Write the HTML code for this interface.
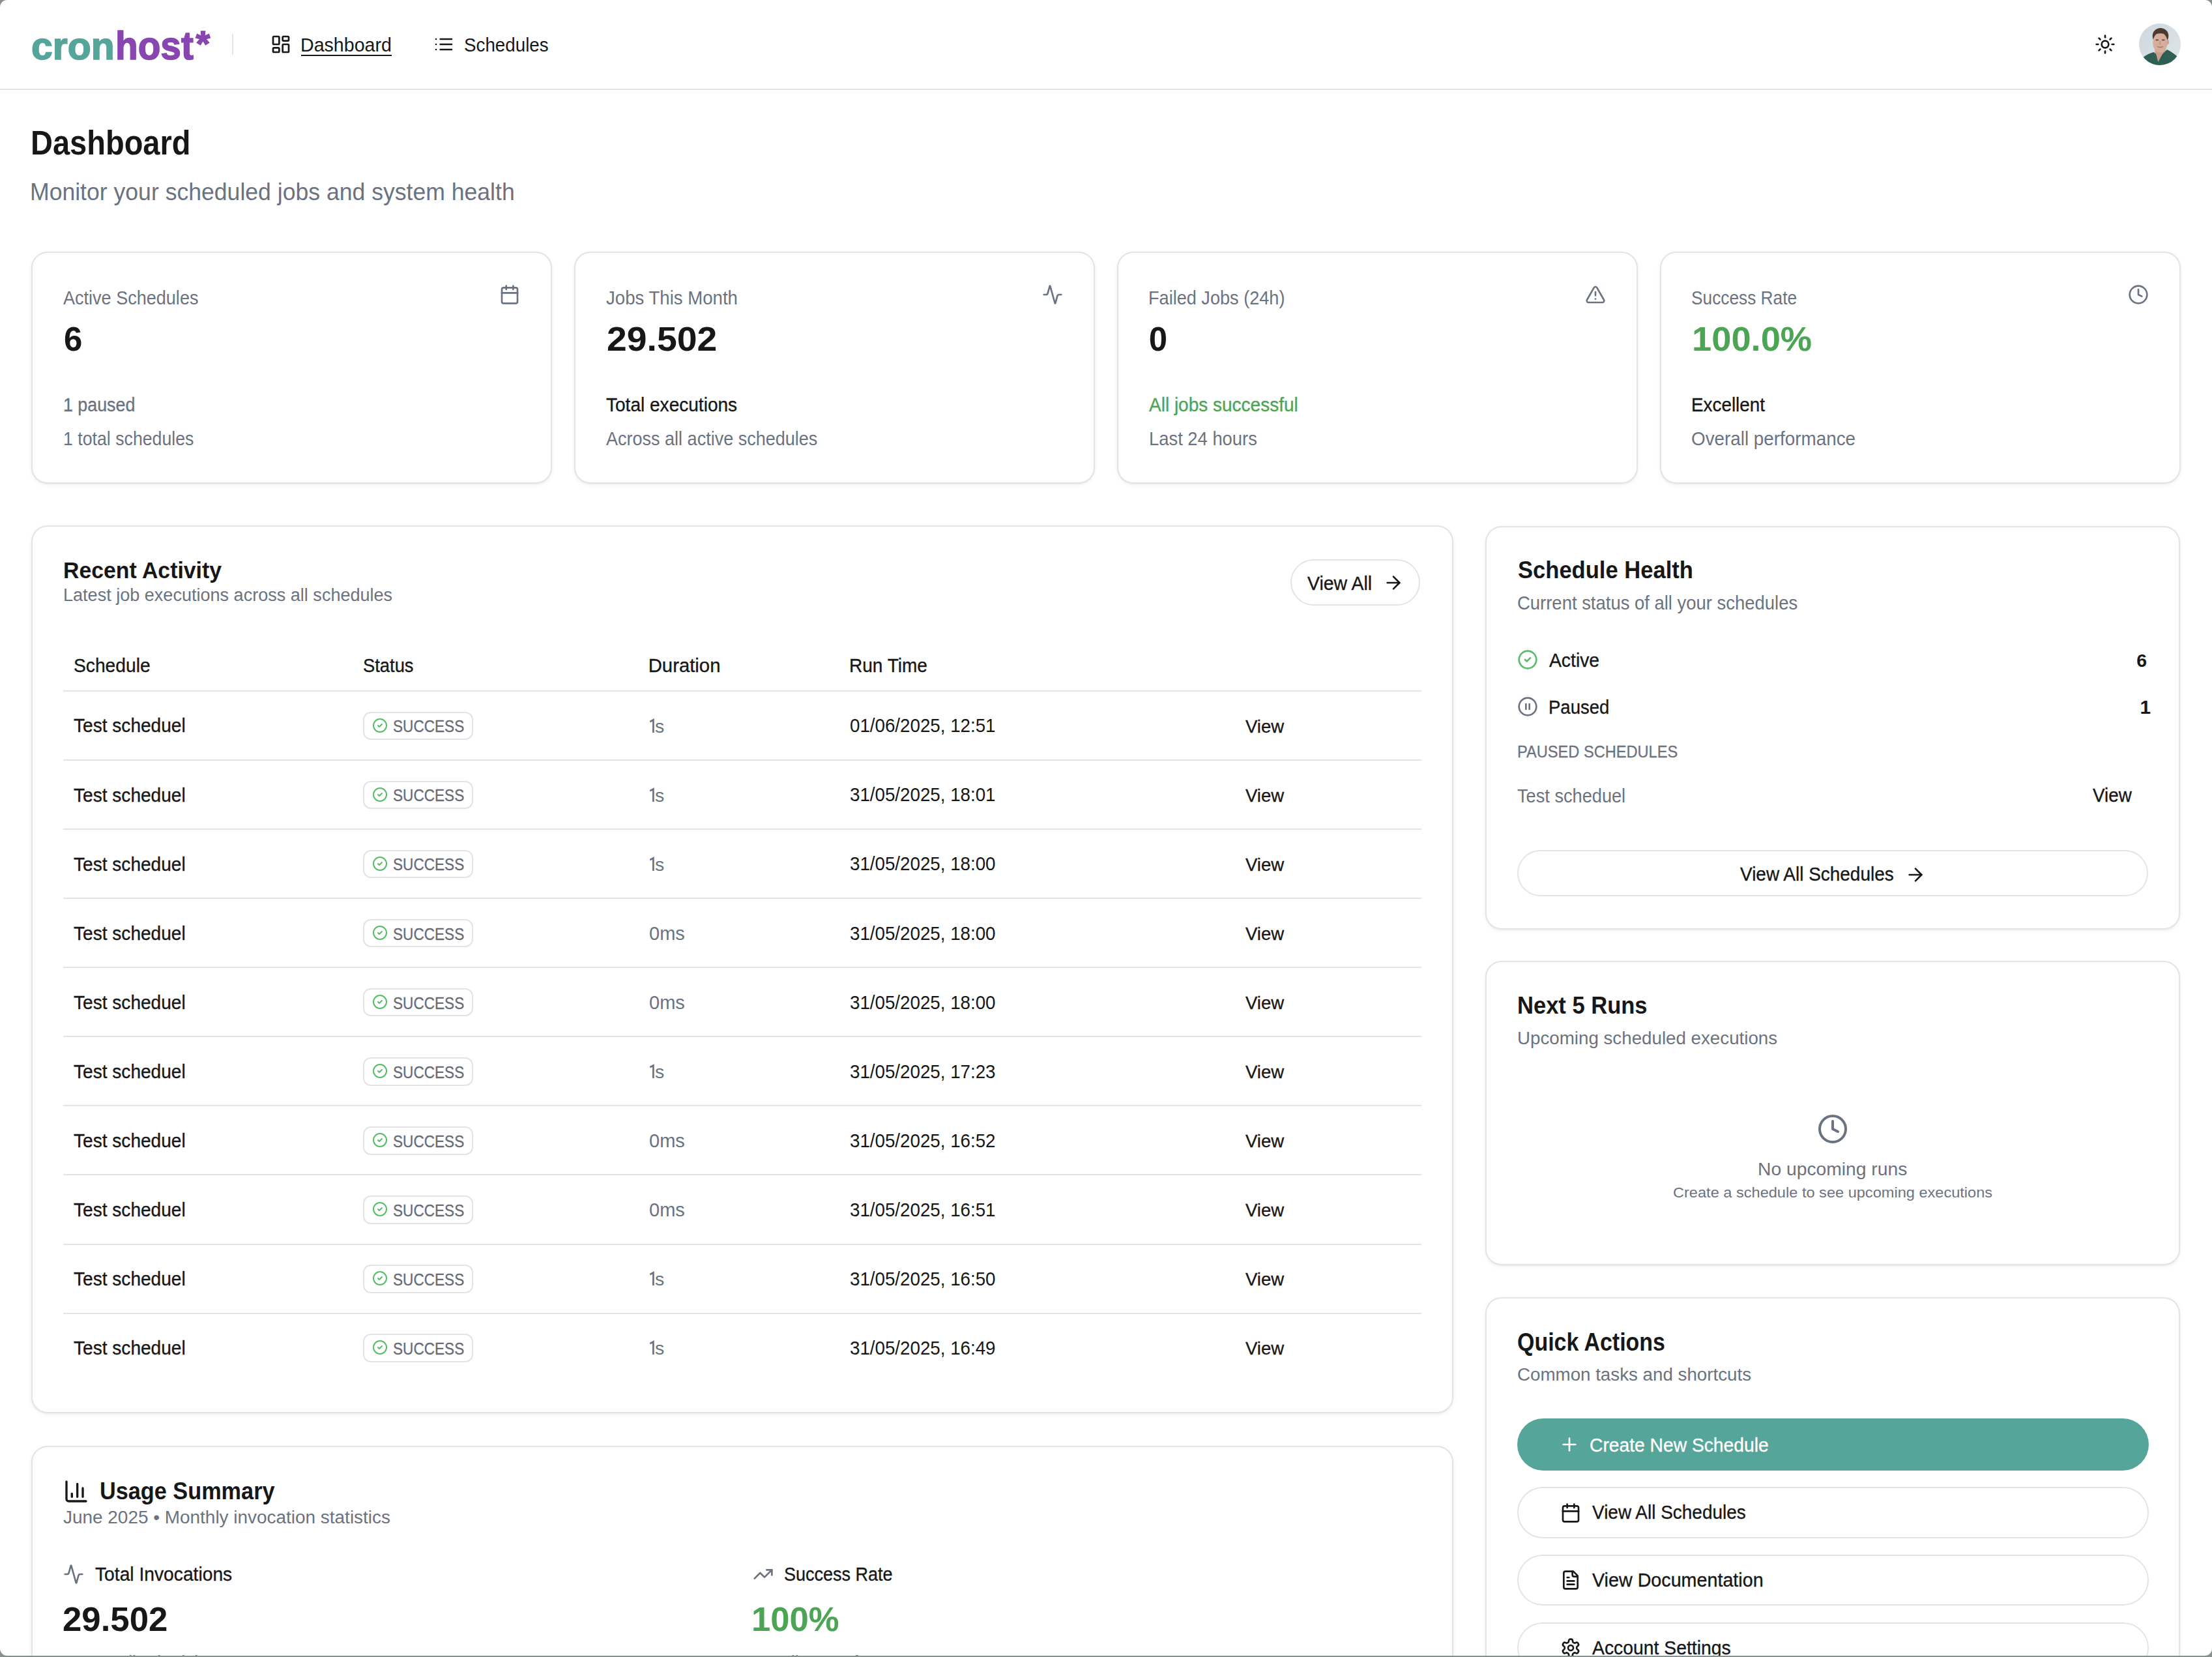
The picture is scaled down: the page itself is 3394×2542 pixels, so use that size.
<!DOCTYPE html>
<html><head><meta charset="utf-8"><style>
html,body{margin:0;padding:0;width:3394px;height:2542px;overflow:hidden;background:#87918f;font-family:"Liberation Sans",sans-serif;}
#win{position:absolute;left:0;top:0;width:3394px;height:2540px;border-radius:11px;background:#fff;overflow:hidden;}
.t{position:absolute;white-space:nowrap;}
</style></head><body><div id="win">
<div style="position:absolute;left:0.0px;top:136.0px;width:3394.0px;height:2.0px;background:#e4e4e7"></div><div style="position:absolute;left:356.0px;top:52.0px;width:2.0px;height:32.0px;background:#e4e4e7"></div><svg style="position:absolute;left:414.5px;top:52.0px" width="32" height="32" viewBox="0 0 24 24" fill="none" stroke="#171717" stroke-width="2" stroke-linecap="round" stroke-linejoin="round"><rect width="7" height="9" x="3" y="3" rx="1"/><rect width="7" height="5" x="14" y="3" rx="1"/><rect width="7" height="9" x="14" y="12" rx="1"/><rect width="7" height="5" x="3" y="16" rx="1"/></svg><div style="position:absolute;left:462.0px;top:84.0px;width:139.0px;height:2.0px;background:#171717"></div><svg style="position:absolute;left:664.5px;top:52.0px" width="32" height="32" viewBox="0 0 24 24" fill="none" stroke="#171717" stroke-width="2" stroke-linecap="round" stroke-linejoin="round"><path d="M3 12h.01"/><path d="M3 18h.01"/><path d="M3 6h.01"/><path d="M8 12h13"/><path d="M8 18h13"/><path d="M8 6h13"/></svg><svg style="position:absolute;left:3214.0px;top:52.0px" width="32" height="32" viewBox="0 0 24 24" fill="none" stroke="#171717" stroke-width="2" stroke-linecap="round" stroke-linejoin="round"><circle cx="12" cy="12" r="4"/><path d="M12 2v2"/><path d="M12 20v2"/><path d="m4.93 4.93 1.41 1.41"/><path d="m17.66 17.66 1.41 1.41"/><path d="M2 12h2"/><path d="M20 12h2"/><path d="m6.34 17.66-1.41 1.41"/><path d="m19.07 4.93-1.41 1.41"/></svg><svg style="position:absolute;left:3282px;top:36px" width="64" height="64" viewBox="0 0 64 64">
<defs><clipPath id="av"><circle cx="32" cy="32" r="32"/></clipPath>
<linearGradient id="avbg" x1="0" y1="0" x2="1" y2="1"><stop offset="0" stop-color="#cdd7de"/><stop offset="1" stop-color="#dfe5ea"/></linearGradient></defs>
<g clip-path="url(#av)">
<rect width="64" height="64" fill="url(#avbg)"/>
<path d="M24 36 L41 36 L40 52 L30 60 L25 50 Z" fill="#c99f8e"/>
<path d="M-2 66 L6 52 Q14 46 23 44 L29.5 59 L36 47 L43 40 Q53 45 60 52 L66 66 Z" fill="#2d5f54"/>
<path d="M23 44 L29.5 59 L26 47 Z M43 40 L30 58 L38 46 Z" fill="#234a41"/>
<ellipse cx="33" cy="19" rx="12.3" ry="12" fill="#4b3a2f"/>
<ellipse cx="32.5" cy="29.5" rx="11.2" ry="15.5" fill="#d6ac9b"/>
<path d="M21.2 25 Q20.5 13 26 12 Q33 9 40 12 Q45 14 44.6 25 Q43.5 17 39 16 Q32 14.5 25 16.5 Q22 19 21.2 25 Z" fill="#4b3a2f"/>
<ellipse cx="44.2" cy="28.5" rx="2" ry="3.5" fill="#cfa392"/>
<rect x="25.5" y="24.5" width="4.5" height="1.8" rx="0.8" fill="#5e4338"/><rect x="35" y="24.5" width="4.5" height="1.8" rx="0.8" fill="#5e4338"/>
<path d="M32.5 27 L31.5 31.5 L34 31.5" stroke="#b98a78" stroke-width="1" fill="none"/>
<path d="M28 35.5 Q32.5 37.5 37 35.5" stroke="#9c6b5c" stroke-width="1.3" fill="none"/>
</g></svg>
<div style="position:absolute;left:48.0px;top:386.0px;width:799.0px;height:356.0px;border:2px solid #e4e4e7;border-radius:25px;background:#fff;box-sizing:border-box;box-shadow:0 2px 6px rgba(0,0,0,0.06),0 1px 2px rgba(0,0,0,0.04)"></div><div style="position:absolute;left:881.0px;top:386.0px;width:799.0px;height:356.0px;border:2px solid #e4e4e7;border-radius:25px;background:#fff;box-sizing:border-box;box-shadow:0 2px 6px rgba(0,0,0,0.06),0 1px 2px rgba(0,0,0,0.04)"></div><div style="position:absolute;left:1714.0px;top:386.0px;width:799.0px;height:356.0px;border:2px solid #e4e4e7;border-radius:25px;background:#fff;box-sizing:border-box;box-shadow:0 2px 6px rgba(0,0,0,0.06),0 1px 2px rgba(0,0,0,0.04)"></div><div style="position:absolute;left:2547.0px;top:386.0px;width:799.0px;height:356.0px;border:2px solid #e4e4e7;border-radius:25px;background:#fff;box-sizing:border-box;box-shadow:0 2px 6px rgba(0,0,0,0.06),0 1px 2px rgba(0,0,0,0.04)"></div><svg style="position:absolute;left:766.0px;top:436.0px" width="32" height="32" viewBox="0 0 24 24" fill="none" stroke="#6b7280" stroke-width="2" stroke-linecap="round" stroke-linejoin="round"><path d="M8 2v4"/><path d="M16 2v4"/><rect width="18" height="18" x="3" y="4" rx="2"/><path d="M3 10h18"/></svg><svg style="position:absolute;left:1599.0px;top:436.0px" width="32" height="32" viewBox="0 0 24 24" fill="none" stroke="#6b7280" stroke-width="2" stroke-linecap="round" stroke-linejoin="round"><path d="M22 12h-2.48a2 2 0 0 0-1.93 1.46l-2.35 8.36a.25.25 0 0 1-.48 0L9.24 2.18a.25.25 0 0 0-.48 0l-2.35 8.36A2 2 0 0 1 4.49 12H2"/></svg><svg style="position:absolute;left:2432.0px;top:436.0px" width="32" height="32" viewBox="0 0 24 24" fill="none" stroke="#6b7280" stroke-width="2" stroke-linecap="round" stroke-linejoin="round"><path d="m21.73 18-8-14a2 2 0 0 0-3.48 0l-8 14A2 2 0 0 0 4 21h16a2 2 0 0 0 1.73-3"/><path d="M12 9v4"/><path d="M12 17h.01"/></svg><svg style="position:absolute;left:3265.0px;top:436.0px" width="32" height="32" viewBox="0 0 24 24" fill="none" stroke="#6b7280" stroke-width="2" stroke-linecap="round" stroke-linejoin="round"><circle cx="12" cy="12" r="10"/><polyline points="12 6 12 12 16 14"/></svg><div style="position:absolute;left:48.0px;top:806.0px;width:2182.0px;height:1362.0px;border:2px solid #e4e4e7;border-radius:25px;background:#fff;box-sizing:border-box;box-shadow:0 2px 6px rgba(0,0,0,0.06),0 1px 2px rgba(0,0,0,0.04)"></div><div style="position:absolute;left:1980.4px;top:858.1px;width:199.1px;height:71.4px;border:2px solid #e4e4e7;border-radius:40px;box-sizing:border-box;background:#fff"></div><svg style="position:absolute;left:2122.2px;top:878.2px" width="32" height="32" viewBox="0 0 24 24" fill="none" stroke="#171717" stroke-width="2" stroke-linecap="round" stroke-linejoin="round"><path d="M5 12h14"/><path d="m12 5 7 7-7 7"/></svg><div style="position:absolute;left:97.0px;top:1059.1px;width:2084.0px;height:2.0px;background:#e4e4e7"></div><div style="position:absolute;left:97.0px;top:1165.1px;width:2084.0px;height:2.0px;background:#e4e4e7"></div><div style="position:absolute;left:97.0px;top:1271.2px;width:2084.0px;height:2.0px;background:#e4e4e7"></div><div style="position:absolute;left:97.0px;top:1377.2px;width:2084.0px;height:2.0px;background:#e4e4e7"></div><div style="position:absolute;left:97.0px;top:1483.3px;width:2084.0px;height:2.0px;background:#e4e4e7"></div><div style="position:absolute;left:97.0px;top:1589.3px;width:2084.0px;height:2.0px;background:#e4e4e7"></div><div style="position:absolute;left:97.0px;top:1695.4px;width:2084.0px;height:2.0px;background:#e4e4e7"></div><div style="position:absolute;left:97.0px;top:1801.4px;width:2084.0px;height:2.0px;background:#e4e4e7"></div><div style="position:absolute;left:97.0px;top:1907.5px;width:2084.0px;height:2.0px;background:#e4e4e7"></div><div style="position:absolute;left:97.0px;top:2013.5px;width:2084.0px;height:2.0px;background:#e4e4e7"></div><div style="position:absolute;left:557.2px;top:1091.7px;width:168.4px;height:43.6px;border:2px solid #e4e4e7;border-radius:12px;box-sizing:border-box;background:#fff"></div><svg style="position:absolute;left:571.0px;top:1101.0px" width="24" height="24" viewBox="0 0 24 24" fill="none" stroke="#56bd68" stroke-width="2" stroke-linecap="round" stroke-linejoin="round"><circle cx="12" cy="12" r="10"/><path d="m9 12 2 2 4-4"/></svg><svg style="position:absolute;left:990px;top:1094.0px" width="20" height="36" viewBox="990 1094.0 20 36"><path d="M997.3 1107.2 L1002.4 1104.4 L1002.4 1124.0" stroke="#6b7280" stroke-width="2.7" fill="none" stroke-linejoin="miter"/></svg><div style="position:absolute;left:557.2px;top:1197.8px;width:168.4px;height:43.6px;border:2px solid #e4e4e7;border-radius:12px;box-sizing:border-box;background:#fff"></div><svg style="position:absolute;left:571.0px;top:1207.0px" width="24" height="24" viewBox="0 0 24 24" fill="none" stroke="#56bd68" stroke-width="2" stroke-linecap="round" stroke-linejoin="round"><circle cx="12" cy="12" r="10"/><path d="m9 12 2 2 4-4"/></svg><svg style="position:absolute;left:990px;top:1200.0px" width="20" height="36" viewBox="990 1200.0 20 36"><path d="M997.3 1213.2 L1002.4 1210.5 L1002.4 1230.0" stroke="#6b7280" stroke-width="2.7" fill="none" stroke-linejoin="miter"/></svg><div style="position:absolute;left:557.2px;top:1303.8px;width:168.4px;height:43.6px;border:2px solid #e4e4e7;border-radius:12px;box-sizing:border-box;background:#fff"></div><svg style="position:absolute;left:571.0px;top:1313.1px" width="24" height="24" viewBox="0 0 24 24" fill="none" stroke="#56bd68" stroke-width="2" stroke-linecap="round" stroke-linejoin="round"><circle cx="12" cy="12" r="10"/><path d="m9 12 2 2 4-4"/></svg><svg style="position:absolute;left:990px;top:1306.1px" width="20" height="36" viewBox="990 1306.1 20 36"><path d="M997.3 1319.3 L1002.4 1316.5 L1002.4 1336.1" stroke="#6b7280" stroke-width="2.7" fill="none" stroke-linejoin="miter"/></svg><div style="position:absolute;left:557.2px;top:1409.9px;width:168.4px;height:43.6px;border:2px solid #e4e4e7;border-radius:12px;box-sizing:border-box;background:#fff"></div><svg style="position:absolute;left:571.0px;top:1419.2px" width="24" height="24" viewBox="0 0 24 24" fill="none" stroke="#56bd68" stroke-width="2" stroke-linecap="round" stroke-linejoin="round"><circle cx="12" cy="12" r="10"/><path d="m9 12 2 2 4-4"/></svg><div style="position:absolute;left:557.2px;top:1515.9px;width:168.4px;height:43.6px;border:2px solid #e4e4e7;border-radius:12px;box-sizing:border-box;background:#fff"></div><svg style="position:absolute;left:571.0px;top:1525.2px" width="24" height="24" viewBox="0 0 24 24" fill="none" stroke="#56bd68" stroke-width="2" stroke-linecap="round" stroke-linejoin="round"><circle cx="12" cy="12" r="10"/><path d="m9 12 2 2 4-4"/></svg><div style="position:absolute;left:557.2px;top:1622.0px;width:168.4px;height:43.6px;border:2px solid #e4e4e7;border-radius:12px;box-sizing:border-box;background:#fff"></div><svg style="position:absolute;left:571.0px;top:1631.2px" width="24" height="24" viewBox="0 0 24 24" fill="none" stroke="#56bd68" stroke-width="2" stroke-linecap="round" stroke-linejoin="round"><circle cx="12" cy="12" r="10"/><path d="m9 12 2 2 4-4"/></svg><svg style="position:absolute;left:990px;top:1624.2px" width="20" height="36" viewBox="990 1624.2 20 36"><path d="M997.3 1637.5 L1002.4 1634.7 L1002.4 1654.2" stroke="#6b7280" stroke-width="2.7" fill="none" stroke-linejoin="miter"/></svg><div style="position:absolute;left:557.2px;top:1728.0px;width:168.4px;height:43.6px;border:2px solid #e4e4e7;border-radius:12px;box-sizing:border-box;background:#fff"></div><svg style="position:absolute;left:571.0px;top:1737.3px" width="24" height="24" viewBox="0 0 24 24" fill="none" stroke="#56bd68" stroke-width="2" stroke-linecap="round" stroke-linejoin="round"><circle cx="12" cy="12" r="10"/><path d="m9 12 2 2 4-4"/></svg><div style="position:absolute;left:557.2px;top:1834.0px;width:168.4px;height:43.6px;border:2px solid #e4e4e7;border-radius:12px;box-sizing:border-box;background:#fff"></div><svg style="position:absolute;left:571.0px;top:1843.3px" width="24" height="24" viewBox="0 0 24 24" fill="none" stroke="#56bd68" stroke-width="2" stroke-linecap="round" stroke-linejoin="round"><circle cx="12" cy="12" r="10"/><path d="m9 12 2 2 4-4"/></svg><div style="position:absolute;left:557.2px;top:1940.1px;width:168.4px;height:43.6px;border:2px solid #e4e4e7;border-radius:12px;box-sizing:border-box;background:#fff"></div><svg style="position:absolute;left:571.0px;top:1949.4px" width="24" height="24" viewBox="0 0 24 24" fill="none" stroke="#56bd68" stroke-width="2" stroke-linecap="round" stroke-linejoin="round"><circle cx="12" cy="12" r="10"/><path d="m9 12 2 2 4-4"/></svg><svg style="position:absolute;left:990px;top:1942.4px" width="20" height="36" viewBox="990 1942.4 20 36"><path d="M997.3 1955.6 L1002.4 1952.8 L1002.4 1972.4" stroke="#6b7280" stroke-width="2.7" fill="none" stroke-linejoin="miter"/></svg><div style="position:absolute;left:557.2px;top:2046.1px;width:168.4px;height:43.6px;border:2px solid #e4e4e7;border-radius:12px;box-sizing:border-box;background:#fff"></div><svg style="position:absolute;left:571.0px;top:2055.4px" width="24" height="24" viewBox="0 0 24 24" fill="none" stroke="#56bd68" stroke-width="2" stroke-linecap="round" stroke-linejoin="round"><circle cx="12" cy="12" r="10"/><path d="m9 12 2 2 4-4"/></svg><svg style="position:absolute;left:990px;top:2048.4px" width="20" height="36" viewBox="990 2048.4 20 36"><path d="M997.3 2061.6 L1002.4 2058.8 L1002.4 2078.4" stroke="#6b7280" stroke-width="2.7" fill="none" stroke-linejoin="miter"/></svg><div style="position:absolute;left:2279.0px;top:807.0px;width:1066.0px;height:619.0px;border:2px solid #e4e4e7;border-radius:25px;background:#fff;box-sizing:border-box;box-shadow:0 2px 6px rgba(0,0,0,0.06),0 1px 2px rgba(0,0,0,0.04)"></div><svg style="position:absolute;left:2328.0px;top:996.0px" width="32" height="32" viewBox="0 0 24 24" fill="none" stroke="#56bd68" stroke-width="2" stroke-linecap="round" stroke-linejoin="round"><circle cx="12" cy="12" r="10"/><path d="m9 12 2 2 4-4"/></svg><svg style="position:absolute;left:2328.0px;top:1067.7px" width="32" height="32" viewBox="0 0 24 24" fill="none" stroke="#6b7280" stroke-width="2" stroke-linecap="round" stroke-linejoin="round"><circle cx="12" cy="12" r="10"/><line x1="10" x2="10" y1="15" y2="9"/><line x1="14" x2="14" y1="15" y2="9"/></svg><div style="position:absolute;left:2328.0px;top:1304.3px;width:968.0px;height:71.2px;border:2px solid #e4e4e7;border-radius:40px;box-sizing:border-box;background:#fff"></div><svg style="position:absolute;left:2922.7px;top:1325.5px" width="32" height="32" viewBox="0 0 24 24" fill="none" stroke="#171717" stroke-width="2" stroke-linecap="round" stroke-linejoin="round"><path d="M5 12h14"/><path d="m12 5 7 7-7 7"/></svg><div style="position:absolute;left:2279.0px;top:1474.0px;width:1066.0px;height:467.0px;border:2px solid #e4e4e7;border-radius:25px;background:#fff;box-sizing:border-box;box-shadow:0 2px 6px rgba(0,0,0,0.06),0 1px 2px rgba(0,0,0,0.04)"></div><svg style="position:absolute;left:2788.0px;top:1707.8px" width="48" height="48" viewBox="0 0 24 24" fill="none" stroke="#6b7280" stroke-width="2" stroke-linecap="round" stroke-linejoin="round"><circle cx="12" cy="12" r="10"/><polyline points="12 6 12 12 16 14"/></svg><div style="position:absolute;left:2279.0px;top:1990.0px;width:1066.0px;height:710.0px;border:2px solid #e4e4e7;border-radius:25px;background:#fff;box-sizing:border-box;box-shadow:0 2px 6px rgba(0,0,0,0.06),0 1px 2px rgba(0,0,0,0.04)"></div><div style="position:absolute;left:2328.0px;top:2176.0px;width:969.0px;height:80.0px;background:#55a59a;border-radius:40px"></div><svg style="position:absolute;left:2392.0px;top:2200.0px" width="32" height="32" viewBox="0 0 24 24" fill="none" stroke="#ffffff" stroke-width="2" stroke-linecap="round" stroke-linejoin="round"><path d="M5 12h14"/><path d="M12 5v14"/></svg><div style="position:absolute;left:2328.0px;top:2281.0px;width:969.0px;height:79.0px;border:2px solid #e4e4e7;border-radius:40px;box-sizing:border-box;background:#fff"></div><svg style="position:absolute;left:2394.0px;top:2304.5px" width="32" height="32" viewBox="0 0 24 24" fill="none" stroke="#171717" stroke-width="2" stroke-linecap="round" stroke-linejoin="round"><path d="M8 2v4"/><path d="M16 2v4"/><rect width="18" height="18" x="3" y="4" rx="2"/><path d="M3 10h18"/></svg><div style="position:absolute;left:2328.0px;top:2384.5px;width:969.0px;height:78.5px;border:2px solid #e4e4e7;border-radius:40px;box-sizing:border-box;background:#fff"></div><svg style="position:absolute;left:2394.0px;top:2407.8px" width="32" height="32" viewBox="0 0 24 24" fill="none" stroke="#171717" stroke-width="2" stroke-linecap="round" stroke-linejoin="round"><path d="M15 2H6a2 2 0 0 0-2 2v16a2 2 0 0 0 2 2h12a2 2 0 0 0 2-2V7Z"/><path d="M14 2v4a2 2 0 0 0 2 2h4"/><path d="M10 9H8"/><path d="M16 13H8"/><path d="M16 17H8"/></svg><div style="position:absolute;left:2328.0px;top:2488.5px;width:969.0px;height:78.5px;border:2px solid #e4e4e7;border-radius:40px;box-sizing:border-box;background:#fff"></div><svg style="position:absolute;left:2394.0px;top:2511.8px" width="32" height="32" viewBox="0 0 24 24" fill="none" stroke="#171717" stroke-width="2" stroke-linecap="round" stroke-linejoin="round"><path d="M12.22 2h-.44a2 2 0 0 0-2 2v.18a2 2 0 0 1-1 1.73l-.43.25a2 2 0 0 1-2 0l-.15-.08a2 2 0 0 0-2.73.73l-.22.38a2 2 0 0 0 .73 2.73l.15.1a2 2 0 0 1 1 1.72v.51a2 2 0 0 1-1 1.74l-.15.09a2 2 0 0 0-.73 2.73l.22.38a2 2 0 0 0 2.73.73l.15-.08a2 2 0 0 1 2 0l.43.25a2 2 0 0 1 1 1.73V20a2 2 0 0 0 2 2h.44a2 2 0 0 0 2-2v-.18a2 2 0 0 1 1-1.73l.43-.25a2 2 0 0 1 2 0l.15.08a2 2 0 0 0 2.73-.73l.22-.39a2 2 0 0 0-.73-2.73l-.15-.08a2 2 0 0 1-1-1.74v-.5a2 2 0 0 1 1-1.74l.15-.09a2 2 0 0 0 .73-2.73l-.22-.38a2 2 0 0 0-2.73-.73l-.15.08a2 2 0 0 1-2 0l-.43-.25a2 2 0 0 1-1-1.73V4a2 2 0 0 0-2-2z"/><circle cx="12" cy="12" r="3"/></svg><div style="position:absolute;left:48.0px;top:2218.0px;width:2182.0px;height:582.0px;border:2px solid #e4e4e7;border-radius:25px;background:#fff;box-sizing:border-box;box-shadow:0 2px 6px rgba(0,0,0,0.06),0 1px 2px rgba(0,0,0,0.04)"></div><svg style="position:absolute;left:96.6px;top:2267.6px" width="40" height="40" viewBox="0 0 24 24" fill="none" stroke="#171717" stroke-width="2" stroke-linecap="round" stroke-linejoin="round"><path d="M3 3v16a2 2 0 0 0 2 2h16"/><path d="M18 17V9"/><path d="M13 17V5"/><path d="M8 17v-3"/></svg><svg style="position:absolute;left:97.4px;top:2399.4px" width="32" height="32" viewBox="0 0 24 24" fill="none" stroke="#6b7280" stroke-width="2" stroke-linecap="round" stroke-linejoin="round"><path d="M22 12h-2.48a2 2 0 0 0-1.93 1.46l-2.35 8.36a.25.25 0 0 1-.48 0L9.24 2.18a.25.25 0 0 0-.48 0l-2.35 8.36A2 2 0 0 1 4.49 12H2"/></svg><svg style="position:absolute;left:1154.9px;top:2398.7px" width="32" height="32" viewBox="0 0 24 24" fill="none" stroke="#6b7280" stroke-width="2" stroke-linecap="round" stroke-linejoin="round"><polyline points="22 7 13.5 15.5 8.5 10.5 2 17"/><polyline points="16 7 22 7 22 13"/></svg>
<div class="t" style="left:47.7px;top:41.6px;font-size:58.35px;line-height:58.35px;letter-spacing:0.00px;font-weight:700;color:#55a59a;-webkit-text-stroke:1.6px #55a59a;transform:scaleX(1.0098);transform-origin:0 0;">cron</div><div class="t" style="left:177.0px;top:38.6px;font-size:61.96px;line-height:61.96px;letter-spacing:0.00px;font-weight:700;color:#8846b0;-webkit-text-stroke:1.6px #8846b0;transform:scaleX(0.9162);transform-origin:0 0;">host</div><div class="t" style="left:300.5px;top:39.1px;font-size:56.00px;line-height:56.00px;letter-spacing:0.00px;font-weight:700;color:#8846b0;-webkit-text-stroke:1.6px #8846b0;">*</div><div class="t" style="left:461.1px;top:54.3px;font-size:29.58px;line-height:29.58px;letter-spacing:0.00px;font-weight:400;color:#171717;transform:scaleX(0.9670);transform-origin:0 0;">Dashboard</div><div class="t" style="left:712.3px;top:54.3px;font-size:29.58px;line-height:29.58px;letter-spacing:0.00px;font-weight:400;color:#171717;transform:scaleX(0.9384);transform-origin:0 0;">Schedules</div><div class="t" style="left:47.0px;top:193.8px;font-size:51.48px;line-height:51.48px;letter-spacing:0.00px;font-weight:700;color:#171717;transform:scaleX(0.9131);transform-origin:0 0;">Dashboard</div><div class="t" style="left:46.2px;top:277.0px;font-size:36.55px;line-height:36.55px;letter-spacing:0.00px;font-weight:400;color:#6b7280;transform:scaleX(0.9736);transform-origin:0 0;">Monitor your scheduled jobs and system health</div><div class="t" style="left:97.3px;top:442.6px;font-size:29.01px;line-height:29.01px;letter-spacing:0.00px;font-weight:400;color:#6b7280;transform:scaleX(0.9325);transform-origin:0 0;">Active Schedules</div><div class="t" style="left:97.9px;top:496.0px;font-size:50.92px;line-height:50.92px;letter-spacing:0.00px;font-weight:700;color:#171717;">6</div><div class="t" style="left:96.5px;top:606.1px;font-size:29.58px;line-height:29.58px;letter-spacing:0.00px;font-weight:400;color:#6b7280;-webkit-text-stroke:0.35px #6b7280;transform:scaleX(0.9068);transform-origin:0 0;">1 paused</div><div class="t" style="left:96.5px;top:658.7px;font-size:28.73px;line-height:28.73px;letter-spacing:0.00px;font-weight:400;color:#6b7280;transform:scaleX(0.9300);transform-origin:0 0;">1 total schedules</div><div class="t" style="left:930.1px;top:442.6px;font-size:29.01px;line-height:29.01px;letter-spacing:0.00px;font-weight:400;color:#6b7280;transform:scaleX(0.9513);transform-origin:0 0;">Jobs This Month</div><div class="t" style="left:931.0px;top:496.0px;font-size:50.92px;line-height:50.92px;letter-spacing:0.00px;font-weight:700;color:#171717;transform:scaleX(1.0865);transform-origin:0 0;">29.502</div><div class="t" style="left:929.9px;top:606.1px;font-size:29.58px;line-height:29.58px;letter-spacing:0.00px;font-weight:400;color:#171717;-webkit-text-stroke:0.35px #171717;transform:scaleX(0.9481);transform-origin:0 0;">Total executions</div><div class="t" style="left:930.3px;top:658.7px;font-size:28.73px;line-height:28.73px;letter-spacing:0.00px;font-weight:400;color:#6b7280;transform:scaleX(0.9407);transform-origin:0 0;">Across all active schedules</div><div class="t" style="left:1762.2px;top:442.6px;font-size:29.01px;line-height:29.01px;letter-spacing:0.00px;font-weight:400;color:#6b7280;transform:scaleX(0.9347);transform-origin:0 0;">Failed Jobs (24h)</div><div class="t" style="left:1762.7px;top:496.0px;font-size:50.92px;line-height:50.92px;letter-spacing:0.00px;font-weight:700;color:#171717;">0</div><div class="t" style="left:1763.0px;top:606.1px;font-size:29.58px;line-height:29.58px;letter-spacing:0.00px;font-weight:400;color:#4ca455;-webkit-text-stroke:0.35px #4ca455;transform:scaleX(0.9465);transform-origin:0 0;">All jobs successful</div><div class="t" style="left:1762.6px;top:658.7px;font-size:28.73px;line-height:28.73px;letter-spacing:0.00px;font-weight:400;color:#6b7280;transform:scaleX(0.9530);transform-origin:0 0;">Last 24 hours</div><div class="t" style="left:2595.3px;top:442.6px;font-size:29.01px;line-height:29.01px;letter-spacing:0.00px;font-weight:400;color:#6b7280;transform:scaleX(0.9061);transform-origin:0 0;">Success Rate</div><div class="t" style="left:2595.9px;top:496.0px;font-size:50.92px;line-height:50.92px;letter-spacing:0.00px;font-weight:700;color:#4ca455;transform:scaleX(1.0665);transform-origin:0 0;">100.0%</div><div class="t" style="left:2594.5px;top:606.1px;font-size:29.58px;line-height:29.58px;letter-spacing:0.00px;font-weight:400;color:#171717;-webkit-text-stroke:0.35px #171717;transform:scaleX(0.9412);transform-origin:0 0;">Excellent</div><div class="t" style="left:2594.8px;top:658.7px;font-size:28.73px;line-height:28.73px;letter-spacing:0.00px;font-weight:400;color:#6b7280;transform:scaleX(0.9688);transform-origin:0 0;">Overall performance</div><div class="t" style="left:97.0px;top:858.1px;font-size:35.70px;line-height:35.70px;letter-spacing:0.00px;font-weight:700;color:#171717;transform:scaleX(0.9476);transform-origin:0 0;">Recent Activity</div><div class="t" style="left:97.0px;top:899.2px;font-size:27.59px;line-height:27.59px;letter-spacing:0.00px;font-weight:400;color:#6b7280;transform:scaleX(0.9807);transform-origin:0 0;">Latest job executions across all schedules</div><div class="t" style="left:2006.2px;top:880.1px;font-size:29.30px;line-height:29.30px;letter-spacing:0.00px;font-weight:400;color:#171717;-webkit-text-stroke:0.35px #171717;transform:scaleX(0.9711);transform-origin:0 0;">View All</div><div class="t" style="left:112.8px;top:1006.2px;font-size:29.30px;line-height:29.30px;letter-spacing:0.00px;font-weight:400;color:#171717;-webkit-text-stroke:0.35px #171717;transform:scaleX(0.9628);transform-origin:0 0;">Schedule</div><div class="t" style="left:556.6px;top:1006.2px;font-size:29.30px;line-height:29.30px;letter-spacing:0.00px;font-weight:400;color:#171717;-webkit-text-stroke:0.35px #171717;transform:scaleX(0.9332);transform-origin:0 0;">Status</div><div class="t" style="left:994.7px;top:1006.2px;font-size:29.30px;line-height:29.30px;letter-spacing:0.00px;font-weight:400;color:#171717;-webkit-text-stroke:0.35px #171717;">Duration</div><div class="t" style="left:1302.8px;top:1006.2px;font-size:29.30px;line-height:29.30px;letter-spacing:0.00px;font-weight:400;color:#171717;-webkit-text-stroke:0.35px #171717;transform:scaleX(0.9557);transform-origin:0 0;">Run Time</div><div class="t" style="left:113.1px;top:1099.4px;font-size:29.01px;line-height:29.01px;letter-spacing:0.00px;font-weight:400;color:#171717;-webkit-text-stroke:0.35px #171717;transform:scaleX(0.9683);transform-origin:0 0;">Test scheduel</div><div class="t" style="left:603.1px;top:1101.3px;font-size:26.17px;line-height:26.17px;letter-spacing:0.00px;font-weight:400;color:#676b76;-webkit-text-stroke:0.31px #676b76;transform:scaleX(0.8636);transform-origin:0 0;">SUCCESS</div><div class="t" style="left:1004.9px;top:1099.9px;font-size:28.50px;line-height:28.50px;letter-spacing:0.00px;font-weight:400;color:#6b7280;">s</div><div class="t" style="left:1304.3px;top:1099.3px;font-size:29.16px;line-height:29.16px;letter-spacing:0.00px;font-weight:400;color:#171717;transform:scaleX(0.9507);transform-origin:0 0;">01/06/2025, 12:51</div><div class="t" style="left:1910.9px;top:1099.9px;font-size:28.44px;line-height:28.44px;letter-spacing:0.00px;font-weight:400;color:#171717;-webkit-text-stroke:0.34px #171717;transform:scaleX(0.9677);transform-origin:0 0;">View</div><div class="t" style="left:113.1px;top:1205.5px;font-size:29.01px;line-height:29.01px;letter-spacing:0.00px;font-weight:400;color:#171717;-webkit-text-stroke:0.35px #171717;transform:scaleX(0.9683);transform-origin:0 0;">Test scheduel</div><div class="t" style="left:603.1px;top:1207.4px;font-size:26.17px;line-height:26.17px;letter-spacing:0.00px;font-weight:400;color:#676b76;-webkit-text-stroke:0.31px #676b76;transform:scaleX(0.8636);transform-origin:0 0;">SUCCESS</div><div class="t" style="left:1004.9px;top:1205.9px;font-size:28.50px;line-height:28.50px;letter-spacing:0.00px;font-weight:400;color:#6b7280;">s</div><div class="t" style="left:1304.3px;top:1205.4px;font-size:29.16px;line-height:29.16px;letter-spacing:0.00px;font-weight:400;color:#171717;transform:scaleX(0.9507);transform-origin:0 0;">31/05/2025, 18:01</div><div class="t" style="left:1910.9px;top:1206.0px;font-size:28.44px;line-height:28.44px;letter-spacing:0.00px;font-weight:400;color:#171717;-webkit-text-stroke:0.34px #171717;transform:scaleX(0.9677);transform-origin:0 0;">View</div><div class="t" style="left:113.1px;top:1311.5px;font-size:29.01px;line-height:29.01px;letter-spacing:0.00px;font-weight:400;color:#171717;-webkit-text-stroke:0.35px #171717;transform:scaleX(0.9683);transform-origin:0 0;">Test scheduel</div><div class="t" style="left:603.1px;top:1313.4px;font-size:26.17px;line-height:26.17px;letter-spacing:0.00px;font-weight:400;color:#676b76;-webkit-text-stroke:0.31px #676b76;transform:scaleX(0.8636);transform-origin:0 0;">SUCCESS</div><div class="t" style="left:1004.9px;top:1312.0px;font-size:28.50px;line-height:28.50px;letter-spacing:0.00px;font-weight:400;color:#6b7280;">s</div><div class="t" style="left:1304.3px;top:1311.4px;font-size:29.16px;line-height:29.16px;letter-spacing:0.00px;font-weight:400;color:#171717;transform:scaleX(0.9507);transform-origin:0 0;">31/05/2025, 18:00</div><div class="t" style="left:1910.9px;top:1312.0px;font-size:28.44px;line-height:28.44px;letter-spacing:0.00px;font-weight:400;color:#171717;-webkit-text-stroke:0.34px #171717;transform:scaleX(0.9677);transform-origin:0 0;">View</div><div class="t" style="left:113.1px;top:1417.6px;font-size:29.01px;line-height:29.01px;letter-spacing:0.00px;font-weight:400;color:#171717;-webkit-text-stroke:0.35px #171717;transform:scaleX(0.9683);transform-origin:0 0;">Test scheduel</div><div class="t" style="left:603.1px;top:1419.5px;font-size:26.17px;line-height:26.17px;letter-spacing:0.00px;font-weight:400;color:#676b76;-webkit-text-stroke:0.31px #676b76;transform:scaleX(0.8636);transform-origin:0 0;">SUCCESS</div><div class="t" style="left:996.1px;top:1417.5px;font-size:29.16px;line-height:29.16px;letter-spacing:0.00px;font-weight:400;color:#6b7280;transform:scaleX(0.9952);transform-origin:0 0;">0ms</div><div class="t" style="left:1304.3px;top:1417.5px;font-size:29.16px;line-height:29.16px;letter-spacing:0.00px;font-weight:400;color:#171717;transform:scaleX(0.9507);transform-origin:0 0;">31/05/2025, 18:00</div><div class="t" style="left:1910.9px;top:1418.1px;font-size:28.44px;line-height:28.44px;letter-spacing:0.00px;font-weight:400;color:#171717;-webkit-text-stroke:0.34px #171717;transform:scaleX(0.9677);transform-origin:0 0;">View</div><div class="t" style="left:113.1px;top:1523.6px;font-size:29.01px;line-height:29.01px;letter-spacing:0.00px;font-weight:400;color:#171717;-webkit-text-stroke:0.35px #171717;transform:scaleX(0.9683);transform-origin:0 0;">Test scheduel</div><div class="t" style="left:603.1px;top:1525.5px;font-size:26.17px;line-height:26.17px;letter-spacing:0.00px;font-weight:400;color:#676b76;-webkit-text-stroke:0.31px #676b76;transform:scaleX(0.8636);transform-origin:0 0;">SUCCESS</div><div class="t" style="left:996.1px;top:1523.5px;font-size:29.16px;line-height:29.16px;letter-spacing:0.00px;font-weight:400;color:#6b7280;transform:scaleX(0.9952);transform-origin:0 0;">0ms</div><div class="t" style="left:1304.3px;top:1523.5px;font-size:29.16px;line-height:29.16px;letter-spacing:0.00px;font-weight:400;color:#171717;transform:scaleX(0.9507);transform-origin:0 0;">31/05/2025, 18:00</div><div class="t" style="left:1910.9px;top:1524.1px;font-size:28.44px;line-height:28.44px;letter-spacing:0.00px;font-weight:400;color:#171717;-webkit-text-stroke:0.34px #171717;transform:scaleX(0.9677);transform-origin:0 0;">View</div><div class="t" style="left:113.1px;top:1629.7px;font-size:29.01px;line-height:29.01px;letter-spacing:0.00px;font-weight:400;color:#171717;-webkit-text-stroke:0.35px #171717;transform:scaleX(0.9683);transform-origin:0 0;">Test scheduel</div><div class="t" style="left:603.1px;top:1631.6px;font-size:26.17px;line-height:26.17px;letter-spacing:0.00px;font-weight:400;color:#676b76;-webkit-text-stroke:0.31px #676b76;transform:scaleX(0.8636);transform-origin:0 0;">SUCCESS</div><div class="t" style="left:1004.9px;top:1630.1px;font-size:28.50px;line-height:28.50px;letter-spacing:0.00px;font-weight:400;color:#6b7280;">s</div><div class="t" style="left:1304.3px;top:1629.6px;font-size:29.16px;line-height:29.16px;letter-spacing:0.00px;font-weight:400;color:#171717;transform:scaleX(0.9507);transform-origin:0 0;">31/05/2025, 17:23</div><div class="t" style="left:1910.9px;top:1630.2px;font-size:28.44px;line-height:28.44px;letter-spacing:0.00px;font-weight:400;color:#171717;-webkit-text-stroke:0.34px #171717;transform:scaleX(0.9677);transform-origin:0 0;">View</div><div class="t" style="left:113.1px;top:1735.7px;font-size:29.01px;line-height:29.01px;letter-spacing:0.00px;font-weight:400;color:#171717;-webkit-text-stroke:0.35px #171717;transform:scaleX(0.9683);transform-origin:0 0;">Test scheduel</div><div class="t" style="left:603.1px;top:1737.6px;font-size:26.17px;line-height:26.17px;letter-spacing:0.00px;font-weight:400;color:#676b76;-webkit-text-stroke:0.31px #676b76;transform:scaleX(0.8636);transform-origin:0 0;">SUCCESS</div><div class="t" style="left:996.1px;top:1735.6px;font-size:29.16px;line-height:29.16px;letter-spacing:0.00px;font-weight:400;color:#6b7280;transform:scaleX(0.9952);transform-origin:0 0;">0ms</div><div class="t" style="left:1304.3px;top:1735.6px;font-size:29.16px;line-height:29.16px;letter-spacing:0.00px;font-weight:400;color:#171717;transform:scaleX(0.9507);transform-origin:0 0;">31/05/2025, 16:52</div><div class="t" style="left:1910.9px;top:1736.2px;font-size:28.44px;line-height:28.44px;letter-spacing:0.00px;font-weight:400;color:#171717;-webkit-text-stroke:0.34px #171717;transform:scaleX(0.9677);transform-origin:0 0;">View</div><div class="t" style="left:113.1px;top:1841.8px;font-size:29.01px;line-height:29.01px;letter-spacing:0.00px;font-weight:400;color:#171717;-webkit-text-stroke:0.35px #171717;transform:scaleX(0.9683);transform-origin:0 0;">Test scheduel</div><div class="t" style="left:603.1px;top:1843.7px;font-size:26.17px;line-height:26.17px;letter-spacing:0.00px;font-weight:400;color:#676b76;-webkit-text-stroke:0.31px #676b76;transform:scaleX(0.8636);transform-origin:0 0;">SUCCESS</div><div class="t" style="left:996.1px;top:1841.7px;font-size:29.16px;line-height:29.16px;letter-spacing:0.00px;font-weight:400;color:#6b7280;transform:scaleX(0.9952);transform-origin:0 0;">0ms</div><div class="t" style="left:1304.3px;top:1841.7px;font-size:29.16px;line-height:29.16px;letter-spacing:0.00px;font-weight:400;color:#171717;transform:scaleX(0.9507);transform-origin:0 0;">31/05/2025, 16:51</div><div class="t" style="left:1910.9px;top:1842.3px;font-size:28.44px;line-height:28.44px;letter-spacing:0.00px;font-weight:400;color:#171717;-webkit-text-stroke:0.34px #171717;transform:scaleX(0.9677);transform-origin:0 0;">View</div><div class="t" style="left:113.1px;top:1947.8px;font-size:29.01px;line-height:29.01px;letter-spacing:0.00px;font-weight:400;color:#171717;-webkit-text-stroke:0.35px #171717;transform:scaleX(0.9683);transform-origin:0 0;">Test scheduel</div><div class="t" style="left:603.1px;top:1949.7px;font-size:26.17px;line-height:26.17px;letter-spacing:0.00px;font-weight:400;color:#676b76;-webkit-text-stroke:0.31px #676b76;transform:scaleX(0.8636);transform-origin:0 0;">SUCCESS</div><div class="t" style="left:1004.9px;top:1948.3px;font-size:28.50px;line-height:28.50px;letter-spacing:0.00px;font-weight:400;color:#6b7280;">s</div><div class="t" style="left:1304.3px;top:1947.7px;font-size:29.16px;line-height:29.16px;letter-spacing:0.00px;font-weight:400;color:#171717;transform:scaleX(0.9507);transform-origin:0 0;">31/05/2025, 16:50</div><div class="t" style="left:1910.9px;top:1948.3px;font-size:28.44px;line-height:28.44px;letter-spacing:0.00px;font-weight:400;color:#171717;-webkit-text-stroke:0.34px #171717;transform:scaleX(0.9677);transform-origin:0 0;">View</div><div class="t" style="left:113.1px;top:2053.9px;font-size:29.01px;line-height:29.01px;letter-spacing:0.00px;font-weight:400;color:#171717;-webkit-text-stroke:0.35px #171717;transform:scaleX(0.9683);transform-origin:0 0;">Test scheduel</div><div class="t" style="left:603.1px;top:2055.8px;font-size:26.17px;line-height:26.17px;letter-spacing:0.00px;font-weight:400;color:#676b76;-webkit-text-stroke:0.31px #676b76;transform:scaleX(0.8636);transform-origin:0 0;">SUCCESS</div><div class="t" style="left:1004.9px;top:2054.3px;font-size:28.50px;line-height:28.50px;letter-spacing:0.00px;font-weight:400;color:#6b7280;">s</div><div class="t" style="left:1304.3px;top:2053.8px;font-size:29.16px;line-height:29.16px;letter-spacing:0.00px;font-weight:400;color:#171717;transform:scaleX(0.9507);transform-origin:0 0;">31/05/2025, 16:49</div><div class="t" style="left:1910.9px;top:2054.4px;font-size:28.44px;line-height:28.44px;letter-spacing:0.00px;font-weight:400;color:#171717;-webkit-text-stroke:0.34px #171717;transform:scaleX(0.9677);transform-origin:0 0;">View</div><div class="t" style="left:2328.6px;top:857.0px;font-size:36.84px;line-height:36.84px;letter-spacing:0.00px;font-weight:700;color:#171717;transform:scaleX(0.9384);transform-origin:0 0;">Schedule Health</div><div class="t" style="left:2327.8px;top:910.7px;font-size:28.73px;line-height:28.73px;letter-spacing:0.00px;font-weight:400;color:#6b7280;transform:scaleX(0.9557);transform-origin:0 0;">Current status of all your schedules</div><div class="t" style="left:2376.9px;top:998.4px;font-size:29.30px;line-height:29.30px;letter-spacing:0.00px;font-weight:400;color:#171717;-webkit-text-stroke:0.35px #171717;transform:scaleX(0.9657);transform-origin:0 0;">Active</div><div class="t" style="left:3278.3px;top:999.2px;font-size:28.44px;line-height:28.44px;letter-spacing:0.00px;font-weight:700;color:#171717;">6</div><div class="t" style="left:2375.5px;top:1070.0px;font-size:29.58px;line-height:29.58px;letter-spacing:0.00px;font-weight:400;color:#171717;-webkit-text-stroke:0.35px #171717;transform:scaleX(0.9299);transform-origin:0 0;">Paused</div><div class="t" style="left:3283.6px;top:1069.7px;font-size:29.72px;line-height:29.72px;letter-spacing:0.00px;font-weight:700;color:#171717;">1</div><div class="t" style="left:2327.7px;top:1140.7px;font-size:25.46px;line-height:25.46px;letter-spacing:0.00px;font-weight:400;color:#6b7280;-webkit-text-stroke:0.31px #6b7280;transform:scaleX(0.9275);transform-origin:0 0;">PAUSED SCHEDULES</div><div class="t" style="left:2328.3px;top:1206.6px;font-size:28.73px;line-height:28.73px;letter-spacing:0.00px;font-weight:400;color:#6b7280;transform:scaleX(0.9462);transform-origin:0 0;">Test scheduel</div><div class="t" style="left:3211.4px;top:1206.4px;font-size:29.01px;line-height:29.01px;letter-spacing:0.00px;font-weight:400;color:#171717;-webkit-text-stroke:0.35px #171717;transform:scaleX(0.9583);transform-origin:0 0;">View</div><div class="t" style="left:2669.8px;top:1326.0px;font-size:29.72px;line-height:29.72px;letter-spacing:0.00px;font-weight:400;color:#171717;-webkit-text-stroke:0.36px #171717;transform:scaleX(0.9406);transform-origin:0 0;">View All Schedules</div><div class="t" style="left:2327.7px;top:1524.2px;font-size:37.69px;line-height:37.69px;letter-spacing:0.00px;font-weight:700;color:#171717;transform:scaleX(0.9166);transform-origin:0 0;">Next 5 Runs</div><div class="t" style="left:2327.6px;top:1579.1px;font-size:27.59px;line-height:27.59px;letter-spacing:0.00px;font-weight:400;color:#6b7280;transform:scaleX(1.0052);transform-origin:0 0;">Upcoming scheduled executions</div><div class="t" style="left:2697.1px;top:1779.6px;font-size:27.31px;line-height:27.31px;letter-spacing:0.00px;font-weight:400;color:#6b7280;transform:scaleX(1.0352);transform-origin:0 0;">No upcoming runs</div><div class="t" style="left:2566.5px;top:1818.6px;font-size:22.33px;line-height:22.33px;letter-spacing:0.00px;font-weight:400;color:#6b7280;transform:scaleX(1.0558);transform-origin:0 0;">Create a schedule to see upcoming executions</div><div class="t" style="left:2328.2px;top:2039.8px;font-size:38.40px;line-height:38.40px;letter-spacing:0.00px;font-weight:700;color:#171717;transform:scaleX(0.8840);transform-origin:0 0;">Quick Actions</div><div class="t" style="left:2327.7px;top:2095.2px;font-size:28.02px;line-height:28.02px;letter-spacing:0.00px;font-weight:400;color:#6b7280;transform:scaleX(0.9896);transform-origin:0 0;">Common tasks and shortcuts</div><div class="t" style="left:2439.2px;top:2202.3px;font-size:29.44px;line-height:29.44px;letter-spacing:0.00px;font-weight:400;color:#ffffff;-webkit-text-stroke:0.35px #ffffff;transform:scaleX(0.9591);transform-origin:0 0;">Create New Schedule</div><div class="t" style="left:2443.0px;top:2306.3px;font-size:29.16px;line-height:29.16px;letter-spacing:0.00px;font-weight:400;color:#171717;-webkit-text-stroke:0.35px #171717;transform:scaleX(0.9590);transform-origin:0 0;">View All Schedules</div><div class="t" style="left:2443.0px;top:2410.3px;font-size:29.16px;line-height:29.16px;letter-spacing:0.00px;font-weight:400;color:#171717;-webkit-text-stroke:0.35px #171717;transform:scaleX(0.9840);transform-origin:0 0;">View Documentation</div><div class="t" style="left:2443.0px;top:2514.3px;font-size:29.16px;line-height:29.16px;letter-spacing:0.00px;font-weight:400;color:#171717;-webkit-text-stroke:0.35px #171717;transform:scaleX(0.9721);transform-origin:0 0;">Account Settings</div><div class="t" style="left:153.0px;top:2269.7px;font-size:36.69px;line-height:36.69px;letter-spacing:0.00px;font-weight:700;color:#171717;transform:scaleX(0.9344);transform-origin:0 0;">Usage Summary</div><div class="t" style="left:97.1px;top:2314.0px;font-size:28.02px;line-height:28.02px;letter-spacing:0.00px;font-weight:400;color:#6b7280;transform:scaleX(0.9970);transform-origin:0 0;">June 2025 • Monthly invocation statistics</div><div class="t" style="left:145.6px;top:2401.2px;font-size:29.16px;line-height:29.16px;letter-spacing:0.00px;font-weight:400;color:#171717;-webkit-text-stroke:0.35px #171717;transform:scaleX(0.9680);transform-origin:0 0;">Total Invocations</div><div class="t" style="left:96.4px;top:2458.6px;font-size:51.91px;line-height:51.91px;letter-spacing:0.00px;font-weight:700;color:#171717;transform:scaleX(1.0163);transform-origin:0 0;">29.502</div><div class="t" style="left:1202.7px;top:2401.4px;font-size:29.16px;line-height:29.16px;letter-spacing:0.00px;font-weight:400;color:#171717;-webkit-text-stroke:0.35px #171717;transform:scaleX(0.9253);transform-origin:0 0;">Success Rate</div><div class="t" style="left:1152.6px;top:2458.5px;font-size:51.63px;line-height:51.63px;letter-spacing:0.00px;font-weight:700;color:#4ca455;transform:scaleX(1.0181);transform-origin:0 0;">100%</div><div class="t" style="left:98.0px;top:2536.8px;font-size:29.16px;line-height:29.16px;letter-spacing:0.00px;font-weight:400;color:#6b7280;transform:scaleX(0.8760);transform-origin:0 0;">Across all schedules</div><div class="t" style="left:1153.8px;top:2536.8px;font-size:29.16px;line-height:29.16px;letter-spacing:0.00px;font-weight:400;color:#6b7280;transform:scaleX(0.9214);transform-origin:0 0;">Excellent performance</div>
</div></body></html>
